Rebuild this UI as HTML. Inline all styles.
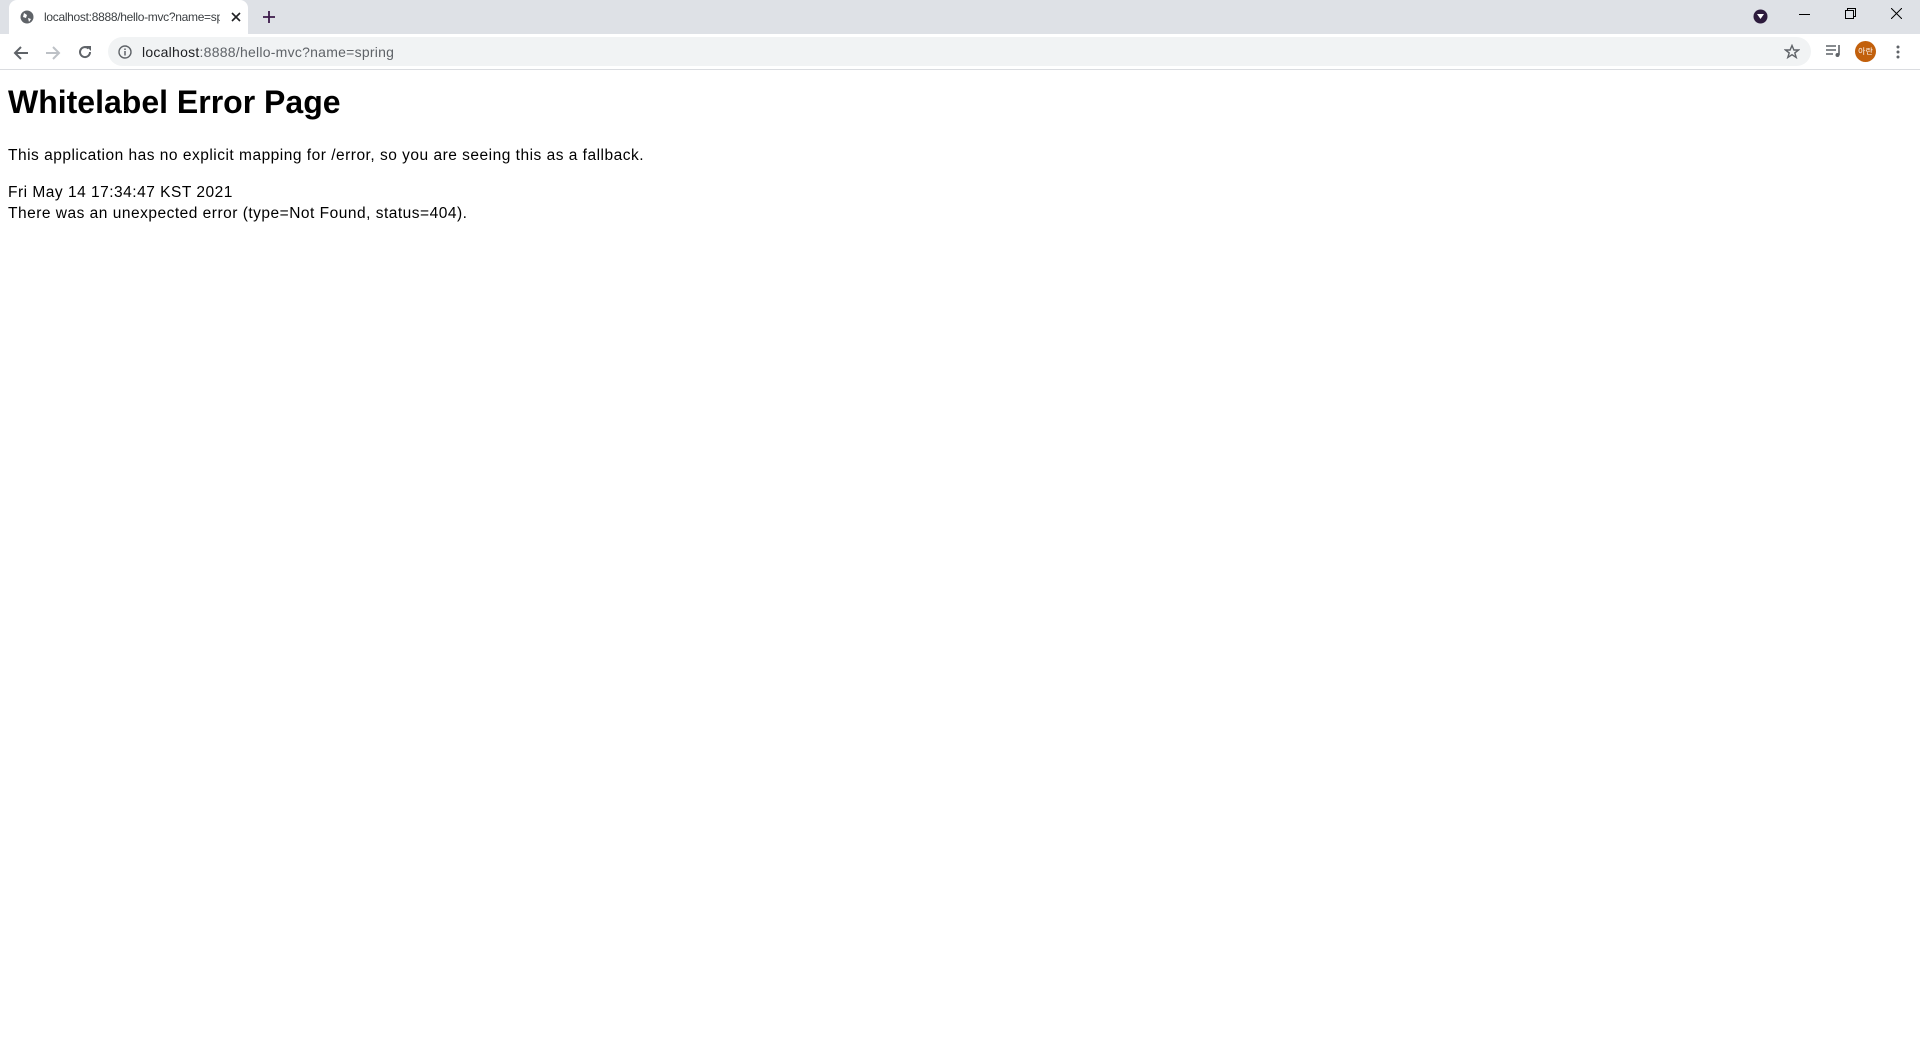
<!DOCTYPE html>
<html><head><meta charset="utf-8"><style>
*{margin:0;padding:0;box-sizing:border-box}
body{width:1920px;height:1040px;background:#fff;font-family:"Liberation Sans","Noto Sans CJK KR",sans-serif;position:relative;overflow:hidden}
.tabbar{position:absolute;left:0;top:0;width:1920px;height:34px;background:#dee1e6}
.tab{position:absolute;left:9px;top:0;width:239px;height:34px;background:#fff;border-radius:8px 8px 0 0}
.tab .t{position:absolute;left:35px;top:10px;font-size:12px;letter-spacing:-0.3px;color:#3c4043;white-space:nowrap;width:176px;overflow:hidden}
.toolbar{position:absolute;left:0;top:34px;width:1920px;height:36px;background:#fff;border-bottom:1px solid #dadce0}
.omni{position:absolute;left:108px;top:3px;width:1703px;height:29px;background:#f1f3f4;border-radius:15px}
.omni .u{position:absolute;left:34px;top:7px;font-size:14px;letter-spacing:0.25px;color:#5f6368}
.omni .u b{font-weight:normal;color:#202124}
.content{position:absolute;left:8px;top:73px}
h1{font-size:32px;font-weight:bold;position:absolute;top:11px;left:0;white-space:nowrap;color:#000}
p{font-size:15.5px;letter-spacing:0.5px;position:absolute;left:0;white-space:nowrap;color:#000;line-height:21px}
</style></head><body>
<div class="tabbar">
 <div class="tab">
  <svg style="position:absolute;left:11px;top:10px" width="14" height="14" viewBox="0 0 14 14"><circle cx="7" cy="7" r="6.5" fill="#5f6368"/><path d="M4 3 L7 5 L6 8 L3 7Z M8 8 L11 9 L9 12Z" fill="#fff"/></svg>
  <div class="t">localhost:8888/hello-mvc?name=spring</div>
  <svg style="position:absolute;left:222px;top:12px" width="10" height="10" viewBox="0 0 10 10"><path d="M1 1L9 9M9 1L1 9" stroke="#202124" stroke-width="1.6"/></svg>
 </div>
 <svg style="position:absolute;left:263px;top:11px" width="12" height="12" viewBox="0 0 12 12"><path d="M6 0V12M0 6H12" stroke="#3c1a4a" stroke-width="1.8"/></svg>
 <svg style="position:absolute;left:1753px;top:9px" width="15" height="15" viewBox="0 0 15 15"><circle cx="7.5" cy="7.5" r="7" fill="#2d1b3d"/><path d="M4 5H11L7.5 10Z" fill="#fff"/></svg>
 <div style="position:absolute;left:1799px;top:14px;width:11px;height:1px;background:#000"></div>
 <svg style="position:absolute;left:1845px;top:8px" width="11" height="11" viewBox="0 0 11 11"><rect x="0.5" y="2.5" width="8" height="8" fill="none" stroke="#000"/><path d="M2.5 2.5V0.5H10.5V8.5H8.5" fill="none" stroke="#000"/></svg>
 <svg style="position:absolute;left:1891px;top:8px" width="11" height="11" viewBox="0 0 11 11"><path d="M0 0L11 11M11 0L0 11" stroke="#000" stroke-width="1"/></svg>
</div>
<div class="toolbar">
 <svg style="position:absolute;left:13px;top:11px" width="16" height="16" viewBox="0 0 16 16"><path d="M15 8H2M8 2L2 8L8 14" fill="none" stroke="#5f6368" stroke-width="2"/></svg>
 <svg style="position:absolute;left:45px;top:11px" width="16" height="16" viewBox="0 0 16 16"><path d="M1 8H14M8 2L14 8L8 14" fill="none" stroke="#bdc1c6" stroke-width="2"/></svg>
 <svg style="position:absolute;left:77px;top:10px" width="16" height="16" viewBox="0 0 16 16"><path d="M13 8A5 5 0 1 1 11.5 4.5" fill="none" stroke="#5f6368" stroke-width="2"/><path d="M9 2H14V7Z" fill="#5f6368"/></svg>
 <div class="omni">
  <svg style="position:absolute;left:10px;top:8px" width="14" height="14" viewBox="0 0 14 14"><circle cx="7" cy="7" r="6" fill="none" stroke="#5f6368" stroke-width="1.4"/><path d="M7 6V10.5M7 3.5V5" stroke="#5f6368" stroke-width="1.5"/></svg>
  <div class="u"><b>localhost</b>:8888/hello-mvc?name=spring</div>
  <svg style="position:absolute;left:1676px;top:7px" width="16" height="16" viewBox="0 0 16 16"><path d="M8 1.5L9.9 6H14.5L10.8 8.9L12.2 13.5L8 10.7L3.8 13.5L5.2 8.9L1.5 6H6.1Z" fill="none" stroke="#5f6368" stroke-width="1.4"/></svg>
 </div>
 <svg style="position:absolute;left:1826px;top:10px" width="16" height="14" viewBox="0 0 16 14"><path d="M0 2H10M0 6H10M0 10H7" stroke="#5f6368" stroke-width="1.6"/><path d="M13 1V11" stroke="#5f6368" stroke-width="1.6"/><circle cx="11.5" cy="11" r="2" fill="#5f6368"/></svg>
 <div style="position:absolute;left:1855px;top:7px;width:21px;height:21px;border-radius:50%;background:#c2600c;color:#fff;font-size:8px;line-height:21px;text-align:center">아란</div>
 <svg style="position:absolute;left:1896px;top:10px" width="4" height="16" viewBox="0 0 4 16"><circle cx="2" cy="3" r="1.5" fill="#5f6368"/><circle cx="2" cy="8" r="1.5" fill="#5f6368"/><circle cx="2" cy="13" r="1.5" fill="#5f6368"/></svg>
</div>
<div class="content">
 <h1>Whitelabel Error Page</h1>
 <p style="top:72px">This application has no explicit mapping for /error, so you are seeing this as a fallback.</p>
 <p style="top:109px">Fri May 14 17:34:47 KST 2021</p>
 <p style="top:130px">There was an unexpected error (type=Not Found, status=404).</p>
</div>
</body></html>
